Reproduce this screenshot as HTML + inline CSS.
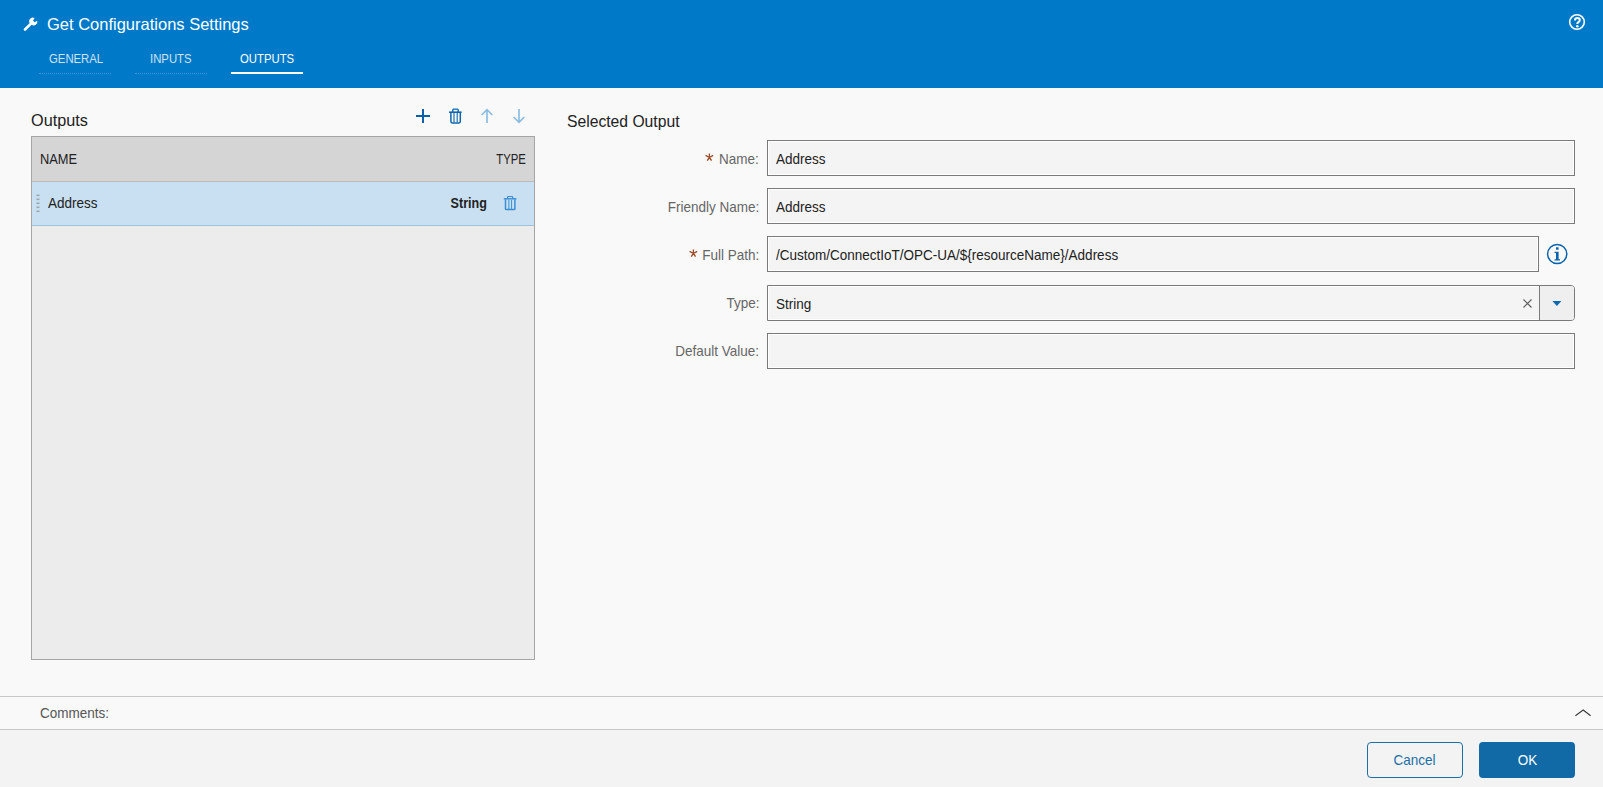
<!DOCTYPE html>
<html><head><meta charset="utf-8">
<style>
*{box-sizing:border-box;margin:0;padding:0}
html,body{width:1603px;height:787px;overflow:hidden;background:#f9f9f9;font-family:"Liberation Sans",sans-serif;color:#222}
.abs{position:absolute;white-space:nowrap}
#hdr{position:absolute;left:0;top:0;width:1603px;height:88px;background:#0079c9}
.title{left:47px;top:13.5px;font-size:16.5px;color:#fff;line-height:20px}
.tab{top:52px;font-size:12.6px;line-height:15px;color:#cfe3f3;transform:scaleX(0.9);transform-origin:left}
.tabline{top:73px;height:1px;border-top:1px dotted rgba(200,225,245,.3)}
.tabsel{top:72px;height:2px;background:#fff}
.sect{font-size:15.7px;line-height:18px;color:#222}
#tbl{position:absolute;left:31px;top:136px;width:504px;height:524px;border:1px solid #a5a5a5;background:#ececec}
#thead{position:absolute;left:0;top:0;width:502px;height:45px;background:#d5d5d5;border-bottom:1px solid #bcbcbc}
#row{position:absolute;left:0;top:45px;width:502px;height:44px;background:#c8e0f1;border-bottom:1px solid #9fc3dd}
.lbl{font-size:14.5px;line-height:16px;color:#666;text-align:right;transform:scaleX(0.931);transform-origin:right}
.req{color:#a0522d;font-weight:bold}
.inp{position:absolute;left:767px;width:808px;height:36px;border:1px solid #7a7a7a;background:#f4f4f4;box-shadow:inset 0 0 0 1px #fff}
.val{font-size:14.5px;line-height:16px;color:#222;transform:scaleX(0.931);transform-origin:left}
#cmt{position:absolute;left:0;top:696px;width:1603px;height:34px;border-top:1px solid #c8c8c8;border-bottom:1px solid #c8c8c8;background:#f9f9f9}
#ftr{position:absolute;left:0;top:730px;width:1603px;height:57px;background:#f3f3f3}
.btn{position:absolute;top:742px;width:96px;height:36px;border-radius:4px;font-size:14.5px;line-height:34px;text-align:center}.btn span{display:inline-block;transform:scaleX(0.931)}
</style></head>
<body>
<div id="hdr"></div>
<!-- wrench -->
<svg class="abs" style="left:23px;top:16px" width="16" height="16" viewBox="0 0 16 16">
<path d="M2 13.5 L8.2 7.3" stroke="#fff" stroke-width="2.6" stroke-linecap="round"/>
<path d="M7.2 7.8 A3.6 3.6 0 0 1 11.6 2.2 L10 4.4 L11.6 6.2 L14.2 4.8 A3.6 3.6 0 0 1 8.6 8.8 Z" fill="#fff"/>
</svg>
<div class="abs title">Get Configurations Settings</div>
<div class="abs tab" style="left:49px">GENERAL</div>
<div class="abs tab" style="left:150px">INPUTS</div>
<div class="abs tab" style="left:240px;color:#fff">OUTPUTS</div>
<div class="abs tabline" style="left:39px;width:72px"></div>
<div class="abs tabline" style="left:135px;width:72px"></div>
<div class="abs tabsel" style="left:231px;width:72px"></div>
<!-- help -->
<svg class="abs" style="left:1568px;top:13px" width="18" height="18" viewBox="0 0 18 18">
<circle cx="9" cy="9" r="7.3" fill="none" stroke="#fff" stroke-width="1.6"/>
<path d="M6.9 7.4 Q6.9 4.9 9.3 4.9 Q11.8 4.9 11.8 7.1 Q11.8 8.5 10.4 9.2 Q9.3 9.8 9.3 11" stroke="#fff" stroke-width="2" fill="none"/><circle cx="9.3" cy="13.3" r="1.25" fill="#fff"/>
</svg>

<div class="abs sect" style="left:31px;top:112px;transform:scaleX(1.035);transform-origin:left">Outputs</div>
<div class="abs sect" style="left:567px;top:113px">Selected Output</div>

<div id="tbl">
 <div id="thead"></div>
 <div id="row"></div>
</div>
<div class="abs val" style="left:40px;top:150.5px;transform:scaleX(0.885);transform-origin:left">NAME</div>
<div class="abs val" style="right:1077px;top:150.5px;transform:scaleX(0.782);transform-origin:right">TYPE</div>
<div class="abs val" style="left:48px;top:195px">Address</div>
<div class="abs val" style="right:1116px;top:195px;font-weight:bold;transform:scaleX(0.866);transform-origin:right">String</div>

<div class="abs lbl" style="right:844px;top:151px">Name:</div>
<div class="abs lbl" style="right:844px;top:199px">Friendly Name:</div>
<div class="abs lbl" style="right:844px;top:247px">Full Path:</div>
<div class="abs lbl" style="right:844px;top:295px">Type:</div>
<div class="abs lbl" style="right:844px;top:343px">Default Value:</div>

<div class="inp" style="top:140px"></div>
<div class="inp" style="top:188px"></div>
<div class="inp" style="top:236px;width:772px"></div>
<div class="inp" style="top:285px;border-radius:0 4px 4px 0"></div>
<div class="inp" style="top:333px"></div>
<div class="abs val" style="left:776px;top:151px">Address</div>
<div class="abs val" style="left:776px;top:199px">Address</div>
<div class="abs val" style="left:776px;top:247px">/Custom/ConnectIoT/OPC-UA/${resourceName}/Address</div>
<div class="abs val" style="left:776px;top:296px">String</div>

<div id="cmt"></div>
<div class="abs val" style="left:40px;top:705px;color:#555">Comments:</div>
<div id="ftr"></div>
<div class="btn" style="left:1367px;border:1px solid #1a6fa8;color:#1a6fa8;background:#f3f3f3"><span>Cancel</span></div>
<div class="btn" style="left:1479px;background:#116aa6;color:#fff;padding-top:1px;padding-left:1px"><span>OK</span></div>

<!-- asterisks -->
<svg class="abs" style="left:703px;top:151px" width="13" height="13" viewBox="0 0 13 13">
<path id="ast" d="M6.4 6.5 V2.5 M6.4 6.5 L2.6 4.3 M6.4 6.5 L10.2 4.3 M6.4 6.5 L4.2 9.6 M6.4 6.5 L8.6 9.6" stroke="#9b4a22" stroke-width="1.35" fill="none"/>
</svg>
<svg class="abs" style="left:687px;top:247px" width="13" height="13" viewBox="0 0 13 13">
<path d="M6.4 6.5 V2.5 M6.4 6.5 L2.6 4.3 M6.4 6.5 L10.2 4.3 M6.4 6.5 L4.2 9.6 M6.4 6.5 L8.6 9.6" stroke="#9b4a22" stroke-width="1.35" fill="none"/>
</svg>
<!-- toolbar icons -->
<svg class="abs" style="left:410px;top:104px" width="130" height="24" viewBox="0 0 130 24">
<path d="M6 12 H20 M13 5 V19" stroke="#0b5ea8" stroke-width="2" fill="none"/>
<path d="M39 8.2 H51.6" stroke="#0f65ad" stroke-width="1.6" fill="none"/>
<path d="M42.8 8 V5.9 Q42.8 5.1 43.6 5.1 H47.4 Q48.2 5.1 48.2 5.9 V8" stroke="#0f65ad" stroke-width="1.4" fill="none"/>
<path d="M40.9 9 V17.6 Q40.9 18.9 42.2 18.9 H49 Q50.3 18.9 50.3 17.6 V9" stroke="#0f65ad" stroke-width="1.5" fill="none"/>
<path d="M44 9 V18.2 M47.2 9 V18.2" stroke="#0f65ad" stroke-width="1.1" fill="none"/>
<path d="M77 6 V19 M71.6 11 L77 5.6 L82.4 11" stroke="#8fbde0" stroke-width="1.7" fill="none"/>
<path d="M109 5 V18 M103.6 13 L109 18.4 L114.4 13" stroke="#8fbde0" stroke-width="1.7" fill="none"/>
</svg>
<!-- drag handle -->
<svg class="abs" style="left:35px;top:193px" width="6" height="21" viewBox="0 0 6 21">
<g fill="#8c96a0" opacity="0.75"><rect x="1.5" y="1.5" width="3" height="1.6"/><rect x="1.5" y="5.5" width="3" height="1.6"/><rect x="1.5" y="9.5" width="3" height="1.6"/><rect x="1.5" y="13.5" width="3" height="1.6"/><rect x="1.5" y="17.5" width="3" height="1.6"/></g>
</svg>
<!-- row trash -->
<svg class="abs" style="left:500px;top:193px" width="20" height="20" viewBox="0 0 20 20">
<path d="M3.8 5.8 H16.4" stroke="#3b8fd6" stroke-width="1.5" fill="none"/>
<path d="M7.6 5.6 V4.2 Q7.6 3.5 8.3 3.5 H12 Q12.7 3.5 12.7 4.2 V5.6" stroke="#3b8fd6" stroke-width="1.2" fill="none"/>
<path d="M5.5 6.5 V15.9 Q5.5 16.6 6.4 16.6 H14 Q14.9 16.6 14.9 15.9 V6.5" stroke="#3b8fd6" stroke-width="1.5" fill="none"/>
<path d="M8.9 7 V16 M11.6 7 V16" stroke="#3b8fd6" stroke-width="1" fill="none"/>
</svg>
<!-- info -->
<svg class="abs" style="left:1545px;top:242px" width="24" height="24" viewBox="0 0 24 24">
<circle cx="12.2" cy="12" r="9.6" fill="none" stroke="#0a63ac" stroke-width="1.5"/>
<rect x="11" y="5.3" width="2.6" height="2.4" fill="#0a63ac"/>
<path d="M9.5 9.8 H13.6 V17.2 H15 V18.6 H9.5 V17.2 H11 V11.1 H9.5 Z" fill="#0a63ac"/>
</svg>
<!-- type clear + dropdown -->
<div class="abs" style="left:1539px;top:286px;width:35px;height:34px;background:#efefef;border-left:1px solid #7a7a7a;border-radius:0 3px 3px 0"></div>
<svg class="abs" style="left:1517px;top:293px" width="60" height="20" viewBox="0 0 60 20">
<path d="M6.5 6.5 L14.5 14.5 M14.5 6.5 L6.5 14.5" stroke="#5a5a5a" stroke-width="1.1" fill="none"/>
<path d="M35.4 8 H44.4 L39.9 13 Z" fill="#0f69b0"/>
</svg>
<!-- chevron -->
<svg class="abs" style="left:1570px;top:704px" width="26" height="16" viewBox="0 0 26 16">
<path d="M5.4 11.7 L13.2 6 L20.6 11.7" stroke="#3a3a3a" stroke-width="1.1" fill="none"/>
</svg>
</body></html>
